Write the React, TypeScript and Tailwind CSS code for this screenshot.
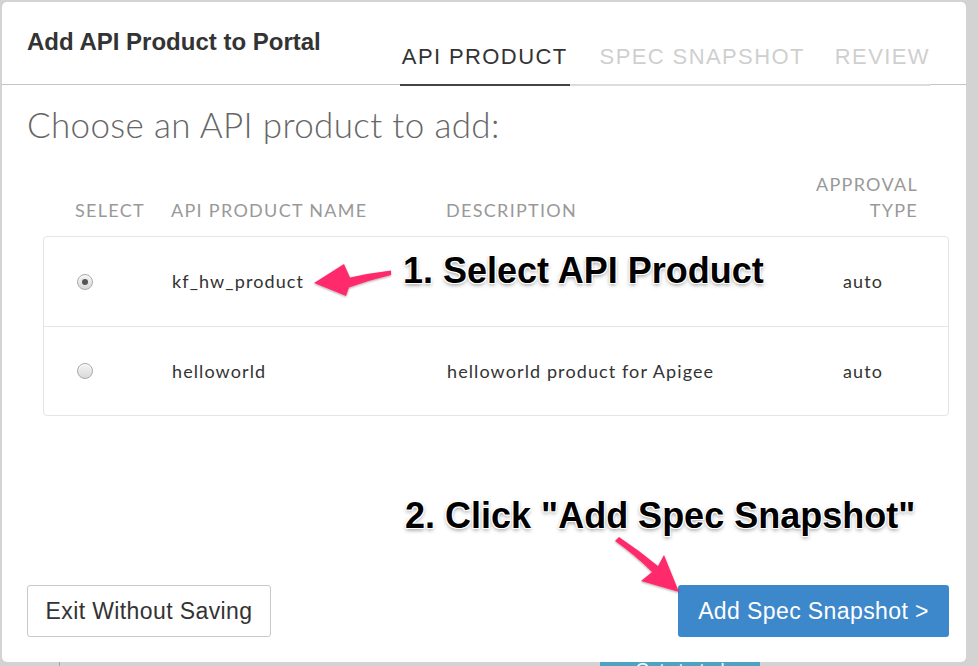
import { useState } from 'react'

const products = [
  { id: 'kf_hw_product', name: 'kf_hw_product', description: '', approval: 'auto' },
  { id: 'helloworld', name: 'helloworld', description: 'helloworld product for Apigee', approval: 'auto' },
]

const tabs = ['API PRODUCT', 'SPEC SNAPSHOT', 'REVIEW']

const calloutShadow =
  '[text-shadow:0_0_1px_#fff,0_0_2px_#fff,1px_1px_0_#fff,-1px_-1px_0_#fff,1px_-1px_0_#fff,-1px_1px_0_#fff,0_2px_4px_rgba(0,0,0,0.45)]'

function Radio({ checked }: { checked: boolean }) {
  return (
    <span className="flex size-[16px] items-center justify-center rounded-full border border-[#a9a9a9] bg-gradient-to-b from-[#f4f4f4] to-[#d9d9d9] shadow-[inset_0_1px_1px_rgba(255,255,255,0.8)]">
      {checked && <span className="size-[6px] rounded-full bg-[#555]" />}
    </span>
  )
}

export default function App() {
  const [selected, setSelected] = useState('kf_hw_product')
  const [activeTab] = useState(0)

  return (
    <div className="flex h-[666px] w-[978px] flex-col overflow-hidden bg-[#d3d3d3]">
      <div className="relative ml-[2px] mt-[2px] flex h-[660px] w-[964px] flex-col rounded-[5px] bg-white font-['Liberation_Sans',sans-serif]">
        {/* header */}
        <div className="flex h-[83px] items-start justify-between border-b border-[#c4c4c4]">
          <h1 className="ml-[25px] mt-[22px] text-[24px] font-bold text-[#333]">Add API Product to Portal</h1>
          <div className="mr-[36px] mt-[38px] flex h-[46px] border-b-2 border-[#dcdcdc]">
            {tabs.map((tab, i) => (
              <div
                key={tab}
                className={
                  i === activeTab
                    ? '-mb-[2px] h-[46px] border-b-2 border-[#444] pl-[2px] pr-[2px] text-[22px] tracking-[1.4px] text-[#333]'
                    : 'ml-[30px] h-[44px] text-[22px] tracking-[1.4px] text-[#cfcfcf]'
                }
              >
                {tab}
              </div>
            ))}
          </div>
        </div>

        <div className="flex flex-1 flex-col pb-[25px] pl-[25px] pr-[17px] font-['Lato',sans-serif]">
          <h2 className="mt-[18px] text-[35px] font-light leading-[42px] tracking-[0.35px] text-[#666]">
            Choose an API product to add:
          </h2>

          {/* table */}
          <div className="ml-[16px] mt-[26px]">
            <div className="flex items-end pb-[13px] text-[18px] leading-[26px] tracking-[1.3px] text-[#999]">
              <div className="w-[128px] pl-[32px]">SELECT</div>
              <div className="w-[275px]">API PRODUCT NAME</div>
              <div className="flex-1">DESCRIPTION</div>
              <div className="w-[150px] pr-[31px] text-right">
                APPROVAL
                <br />
                TYPE
              </div>
            </div>
            <div className="rounded-[4px] border border-[#e5e5e5]">
              {products.map((p, i) => (
                <div
                  key={p.id}
                  onClick={() => setSelected(p.id)}
                  className={`flex h-[89px] cursor-pointer items-center text-[18px] tracking-[1.1px] text-[#333] ${i > 0 ? 'border-t border-[#e5e5e5]' : ''}`}
                >
                  <div className="w-[128px] pl-[33px]">
                    <Radio checked={selected === p.id} />
                  </div>
                  <div className="w-[275px]">{p.name}</div>
                  <div className="flex-1">{p.description}</div>
                  <div className="w-[105px]">{p.approval}</div>
                </div>
              ))}
            </div>
          </div>

          <div className="mt-auto flex items-center justify-between font-['Liberation_Sans',sans-serif] text-[23px] tracking-[0.4px]">
            <button className="h-[52px] w-[244px] rounded-[3px] border border-[#c8c8c8] bg-white text-[#333]">
              Exit Without Saving
            </button>
            <button className="h-[52px] w-[271px] rounded-[3px] bg-[#3d88ca] text-white">Add Spec Snapshot &gt;</button>
          </div>
        </div>

        {/* annotations laid over the dialog */}
        <div className={`absolute left-[401px] top-[242px] font-['Liberation_Sans',sans-serif] text-[36px] font-bold text-black ${calloutShadow}`}>
          1. Select API Product
        </div>
        <div className={`absolute left-[403px] top-[487px] font-['Liberation_Sans',sans-serif] text-[36px] font-bold text-black ${calloutShadow}`}>
          2. Click "Add Spec Snapshot"
        </div>
        <svg className="pointer-events-none absolute left-0 top-0" width="964" height="660" viewBox="2 2 964 660">
          <defs>
            <filter id="arrowShadow" x="-20%" y="-20%" width="140%" height="140%">
              <feDropShadow dx="0" dy="1" stdDeviation="1.2" floodColor="#000" floodOpacity="0.35" />
            </filter>
          </defs>
          <path
            d="M314 283 L344 264 L350 277.5 Q370 273 391 270.5 L391 275 Q370 280 349 287.5 L346 296 Z"
            fill="#ff2c6c"
            filter="url(#arrowShadow)"
          />
          <path
            d="M679 592 L641 581 L652 572 Q636 556 615 541 L619 537 Q640 551 658 566 L664 555 Z"
            fill="#ff2c6c"
            filter="url(#arrowShadow)"
          />
        </svg>
      </div>

      {/* page behind the dialog */}
      <div className="flex h-[4px] shrink-0">
        <div className="ml-[59px] w-px bg-[#a8a8a8]" />
        <div className="ml-[540px] w-[160px] overflow-hidden bg-[#4ea3c2] text-center font-['Liberation_Sans',sans-serif] text-[18px] leading-[16px] text-white">
          Get started
        </div>
      </div>
    </div>
  )
}
